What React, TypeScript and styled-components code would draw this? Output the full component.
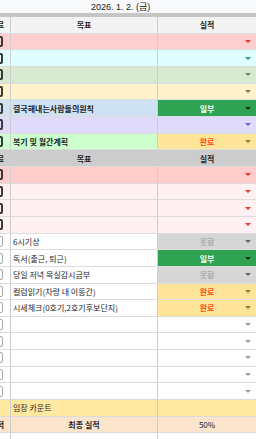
import React from "react";
import styled, { createGlobalStyle } from "styled-components";

const GlobalStyle = createGlobalStyle`
  html, body { margin: 0; padding: 0; background: #ffffff; }
  * { box-sizing: border-box; }
`;

const Sheet = styled.div`
  width: 256px;
  height: 439px;
  overflow: hidden;
  background: #ffffff;
  font-family: "Noto Sans CJK KR", "Noto Sans", sans-serif;
  color: #222;
`;

const DateBar = styled.div`
  height: 17px;
  background: #f8f9fa;
  border-bottom: 4px solid #c6c6c6;
  display: flex;
  align-items: center;
  padding-left: 91px;
  font-family: "Liberation Sans", "Noto Sans CJK KR", sans-serif;
  font-size: 9px;
  color: #222;
`;

const Row = styled.div<{ $bg: string; $line: string }>`
  display: grid;
  grid-template-columns: 11px 147px 1fr;
  height: 16.67px;
  background: ${(p) => p.$bg};
  border-bottom: 1px solid ${(p) => p.$line};
`;

// the first column is scrolled mostly out of view, only its right edge shows
const LeadCell = styled.div`
  display: flex;
  align-items: center;
  justify-content: flex-end;
  padding-right: 7px;
  overflow: hidden;
  border-right: 1px solid #cdcdcd;
  font-size: 8px;
  font-weight: 700;
  white-space: nowrap;
`;

const LeadText = styled.span`
  flex-shrink: 0;
  margin-right: -1px;
`;

const Checkbox = styled.span<{ $dark: boolean }>`
  flex-shrink: 0;
  width: 11px;
  height: 11px;
  border-radius: 2px;
  border: ${(p) => (p.$dark ? "2px solid #3a3a3a" : "1.5px solid #a8a8a8")};
`;

const GoalCell = styled.div<{ $bold?: boolean; $center?: boolean }>`
  display: flex;
  align-items: center;
  justify-content: ${(p) => (p.$center ? "center" : "flex-start")};
  padding-left: ${(p) => (p.$center ? "0" : "2px")};
  border-right: 1px solid #cdcdcd;
  font-size: 8px;
  font-weight: ${(p) => (p.$bold ? 700 : 400)};
  color: #1e1e2a;
  white-space: nowrap;
  overflow: hidden;
`;

const ResultCell = styled.div<{ $bg?: string; $color?: string; $bold?: boolean }>`
  display: grid;
  grid-template-columns: 1fr auto 1fr;
  align-items: center;
  background: ${(p) => p.$bg || "transparent"};
  color: ${(p) => p.$color || "#222"};
  font-size: 8px;
  font-weight: ${(p) => (p.$bold === false ? 400 : 700)};
  white-space: nowrap;
`;

const ResultText = styled.span`
  grid-column: 2;
`;

const Arrow = styled.span<{ $color: string }>`
  grid-column: 3;
  justify-self: end;
  margin-right: 5px;
  width: 0;
  height: 0;
  border-left: 3px solid transparent;
  border-right: 3px solid transparent;
  border-top: 3.5px solid ${(p) => p.$color};
`;

type Status = { text: string; bg: string; color: string; arrow: string };

const DONE: Status = { text: "완료", bg: "#ffe599", color: "#ff4d12", arrow: "#8c7a34" };
const PART: Status = { text: "일부", bg: "#2fa352", color: "#ffffff", arrow: "#1c2a1c" };
const MISS: Status = { text: "못함", bg: "#d6d6d6", color: "#adadad", arrow: "#666666" };

type RowData = {
  bg: string;
  lead?: string;
  check?: "dark" | "light";
  goal?: string;
  bold?: boolean;
  center?: boolean;
  result?: string;
  status?: Status;
  arrow?: string;
  plain?: boolean;
};

const empty = (bg: string, arrow: string, check: "dark" | "light" = "dark"): RowData => ({
  bg,
  check,
  arrow,
});

const rows: RowData[] = [
  { bg: "#f3f3f3", lead: "완료", goal: "목표", bold: true, center: true, result: "실적", plain: true },
  empty("#ffcfcf", "#e53935"),
  empty("#defffe", "#3f8c8c"),
  empty("#d9ead3", "#6b8b5c"),
  empty("#fff2cc", "#8a7633"),
  { bg: "#cfe2f3", check: "dark", goal: "결국해내는사람들의원칙", bold: true, status: PART },
  empty("#e0dbfa", "#6c5ad8"),
  { bg: "#ccffcc", check: "dark", goal: "복기 및 월간계획", bold: true, status: DONE },
  { bg: "#cccccc", lead: "완료", goal: "목표", bold: true, center: true, result: "실적", plain: true },
  empty("#ffcccc", "#e53935"),
  empty("#fff1f1", "#e53935"),
  empty("#fff1f1", "#e53935"),
  empty("#fff1f1", "#e53935"),
  { bg: "#ffffff", check: "light", goal: "6시기상", status: MISS },
  { bg: "#ffffff", check: "light", goal: "독서(출근, 퇴근)", status: PART },
  { bg: "#ffffff", check: "light", goal: "당일 저녁 목실감시금부", status: MISS },
  { bg: "#ffffff", check: "light", goal: "컬럼읽기(차량 내 이동간)", status: DONE },
  { bg: "#ffffff", check: "light", goal: "시세체크(0호기,2호기후보단지)", status: DONE },
  empty("#ffffff", "#9a9a9a", "light"),
  empty("#ffffff", "#9a9a9a", "light"),
  empty("#ffffff", "#9a9a9a", "light"),
  empty("#ffffff", "#9a9a9a", "light"),
  empty("#ffffff", "#9a9a9a", "light"),
  { bg: "#ffe8a0", goal: "임장 카운트" },
  { bg: "#fce5cd", lead: "실적", goal: "최종 실적", bold: true, center: true, result: "50%" },
  { bg: "#ffffff" },
];

const SheetRow = ({ row }: { row: RowData }) => {
  const s = row.status;
  return (
    <Row $bg={row.bg} $line="#dcdcdc">
      <LeadCell>
        {row.lead && <LeadText>{row.lead}</LeadText>}
        {row.check && <Checkbox $dark={row.check === "dark"} />}
      </LeadCell>
      <GoalCell $bold={row.bold} $center={row.center}>
        {row.goal}
      </GoalCell>
      {s ? (
        <ResultCell $bg={s.bg} $color={s.color}>
          <ResultText>{s.text}</ResultText>
          <Arrow $color={s.arrow} />
        </ResultCell>
      ) : (
        <ResultCell $bold={row.plain ? true : false}>
          <ResultText>{row.result}</ResultText>
          {row.arrow && <Arrow $color={row.arrow} />}
        </ResultCell>
      )}
    </Row>
  );
};

export default function App() {
  return (
    <>
      <GlobalStyle />
      <Sheet>
        <DateBar>2026. 1. 2. (금)</DateBar>
        {rows.map((row, i) => (
          <SheetRow key={i} row={row} />
        ))}
      </Sheet>
    </>
  );
}
